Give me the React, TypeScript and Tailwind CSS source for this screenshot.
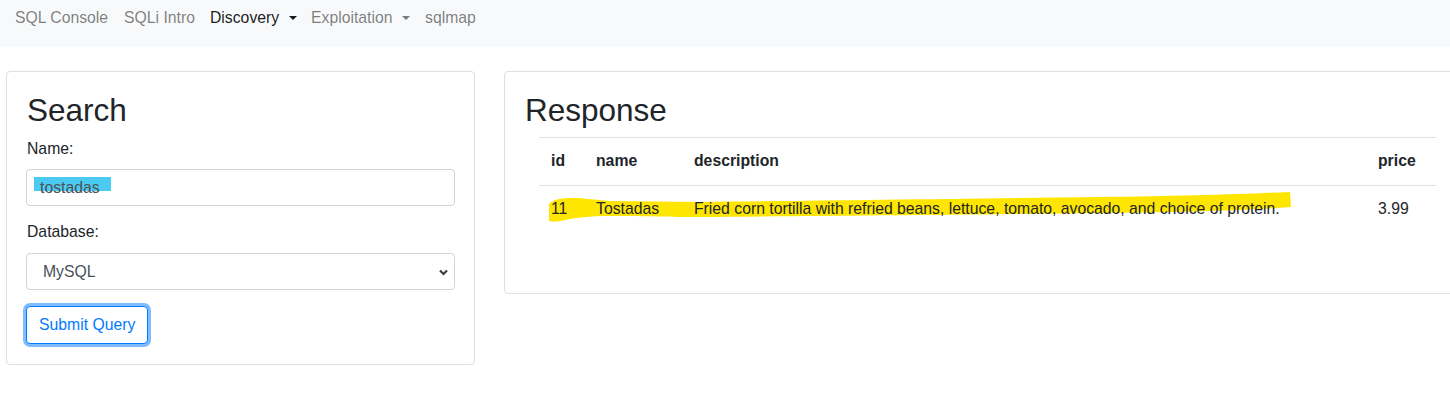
import React from "react";

const navItems = [
  { label: "SQL Console", width: "w-[109px]", active: false, caret: false },
  { label: "SQLi Intro", width: "w-[86px]", active: false, caret: false },
  { label: "Discovery", width: "w-[101px]", active: true, caret: true },
  { label: "Exploitation", width: "w-[114px]", active: false, caret: true },
  { label: "sqlmap", width: "w-[80px]", active: false, caret: false },
];

function Navbar() {
  return (
    <nav className="flex h-[47px] items-start bg-[#f8f9fa] pl-[15px] pt-[6px]">
      {navItems.map((item) => (
        <a
          key={item.label}
          className={`flex shrink-0 items-center leading-6 ${item.width} ${
            item.active ? "text-[rgba(0,0,0,0.9)]" : "text-[rgba(0,0,0,0.5)]"
          }`}
        >
          <span>{item.label}</span>
          {item.caret && (
            <span className="ml-[10px] inline-block h-0 w-0 border-x-[4px] border-t-[4.5px] border-x-transparent border-t-current" />
          )}
        </a>
      ))}
    </nav>
  );
}

function SearchCard() {
  return (
    <div className="ml-[6px] h-[294px] w-[469px] shrink-0 rounded-[4px] border border-[#dfdfdf] px-[19px] pt-[19px]">
      <h2 className="mb-2 pl-px text-[31.5px] leading-[38px]">Search</h2>

      {/* Name */}
      <label className="mb-2 block pl-px leading-6">Name:</label>
      <div className="flex h-[37px] items-center rounded-[4px] border border-[#ced4da] pl-[13px] pr-3 text-[#495057]">
        <span className="relative">
          <span className="absolute -left-[6px] top-[1px] h-[14px] w-[77px] bg-[#4ccbf2]" />
          <span className="relative">tostadas</span>
        </span>
      </div>

      {/* Database */}
      <label className="mb-[9px] mt-[14px] block pl-px leading-6">Database:</label>
      <div className="flex h-[37px] items-center justify-between rounded-[4px] border border-[#ced4da] pl-4 pr-[6px] text-[#495057]">
        <span>MySQL</span>
        <svg width="9" height="7" viewBox="0 0 9 7" className="mt-[2px]">
          <polyline
            points="1,1.5 4.5,5 8,1.5"
            fill="none"
            stroke="#3b3b3b"
            strokeWidth="2.2"
          />
        </svg>
      </div>

      <button className="mt-4 h-[38px] rounded-[4px] border border-[#007bff] bg-white px-3 leading-6 text-[#007bff] shadow-[0_0_0_3px_rgba(0,123,255,0.5)]">
        Submit Query
      </button>
    </div>
  );
}

function ResponseCard() {
  return (
    <div className="relative ml-[29px] h-[223px] w-[970px] shrink-0 rounded-[4px] border border-[#dfdfdf] px-5 pt-[19px]">
      {/* marker highlight */}
      <svg
        className="pointer-events-none absolute left-0 top-0"
        width="970"
        height="223"
      >
        <g transform="translate(-505 -72)">
          <path
            d="M549,204 C552,200 560,198 572,198 C585,198 595,200 610,201 L700,202 C800,201 950,199 1100,197 C1180,196 1240,194 1290,192 L1291,207 C1250,210 1200,212 1100,213 C950,215 800,216 700,217 C660,217 640,216 610,216 C590,216 575,218 565,220 C558,222 552,222 549,221 Z"
            fill="#ffe600"
          />
        </g>
      </svg>

      <h2 className="relative mb-2 text-[31.5px] leading-[38px]">Response</h2>
      <table className="relative ml-[14px] w-[897px] table-fixed border-collapse text-left">
        <colgroup>
          <col className="w-[45px]" />
          <col className="w-[98px]" />
          <col className="w-[684px]" />
          <col className="w-[70px]" />
        </colgroup>
        <thead>
          <tr className="border-y border-[#dee2e6]">
            <th className="px-3 pb-[12px] pt-[11px] font-bold leading-6">id</th>
            <th className="px-3 pb-[12px] pt-[11px] font-bold leading-6">name</th>
            <th className="px-3 pb-[12px] pt-[11px] font-bold leading-6">description</th>
            <th className="px-3 pb-[12px] pt-[11px] font-bold leading-6">price</th>
          </tr>
        </thead>
        <tbody>
          <tr>
            <td className="whitespace-nowrap px-3 pt-[11px] leading-6">11</td>
            <td className="whitespace-nowrap px-3 pt-[11px] leading-6">Tostadas</td>
            <td className="whitespace-nowrap px-3 pt-[11px] leading-6">
              Fried corn tortilla with refried beans, lettuce, tomato, avocado, and choice of protein.
            </td>
            <td className="whitespace-nowrap px-3 pt-[11px] leading-6">3.99</td>
          </tr>
        </tbody>
      </table>
    </div>
  );
}

export default function App() {
  return (
    <div className="h-[416px] w-[1450px] overflow-hidden bg-white font-['Liberation_Sans',Arial,sans-serif] text-[15.75px] leading-6 text-[#212529]">
      <Navbar />
      <div className="mt-6 flex items-start">
        <SearchCard />
        <ResponseCard />
      </div>
    </div>
  );
}
